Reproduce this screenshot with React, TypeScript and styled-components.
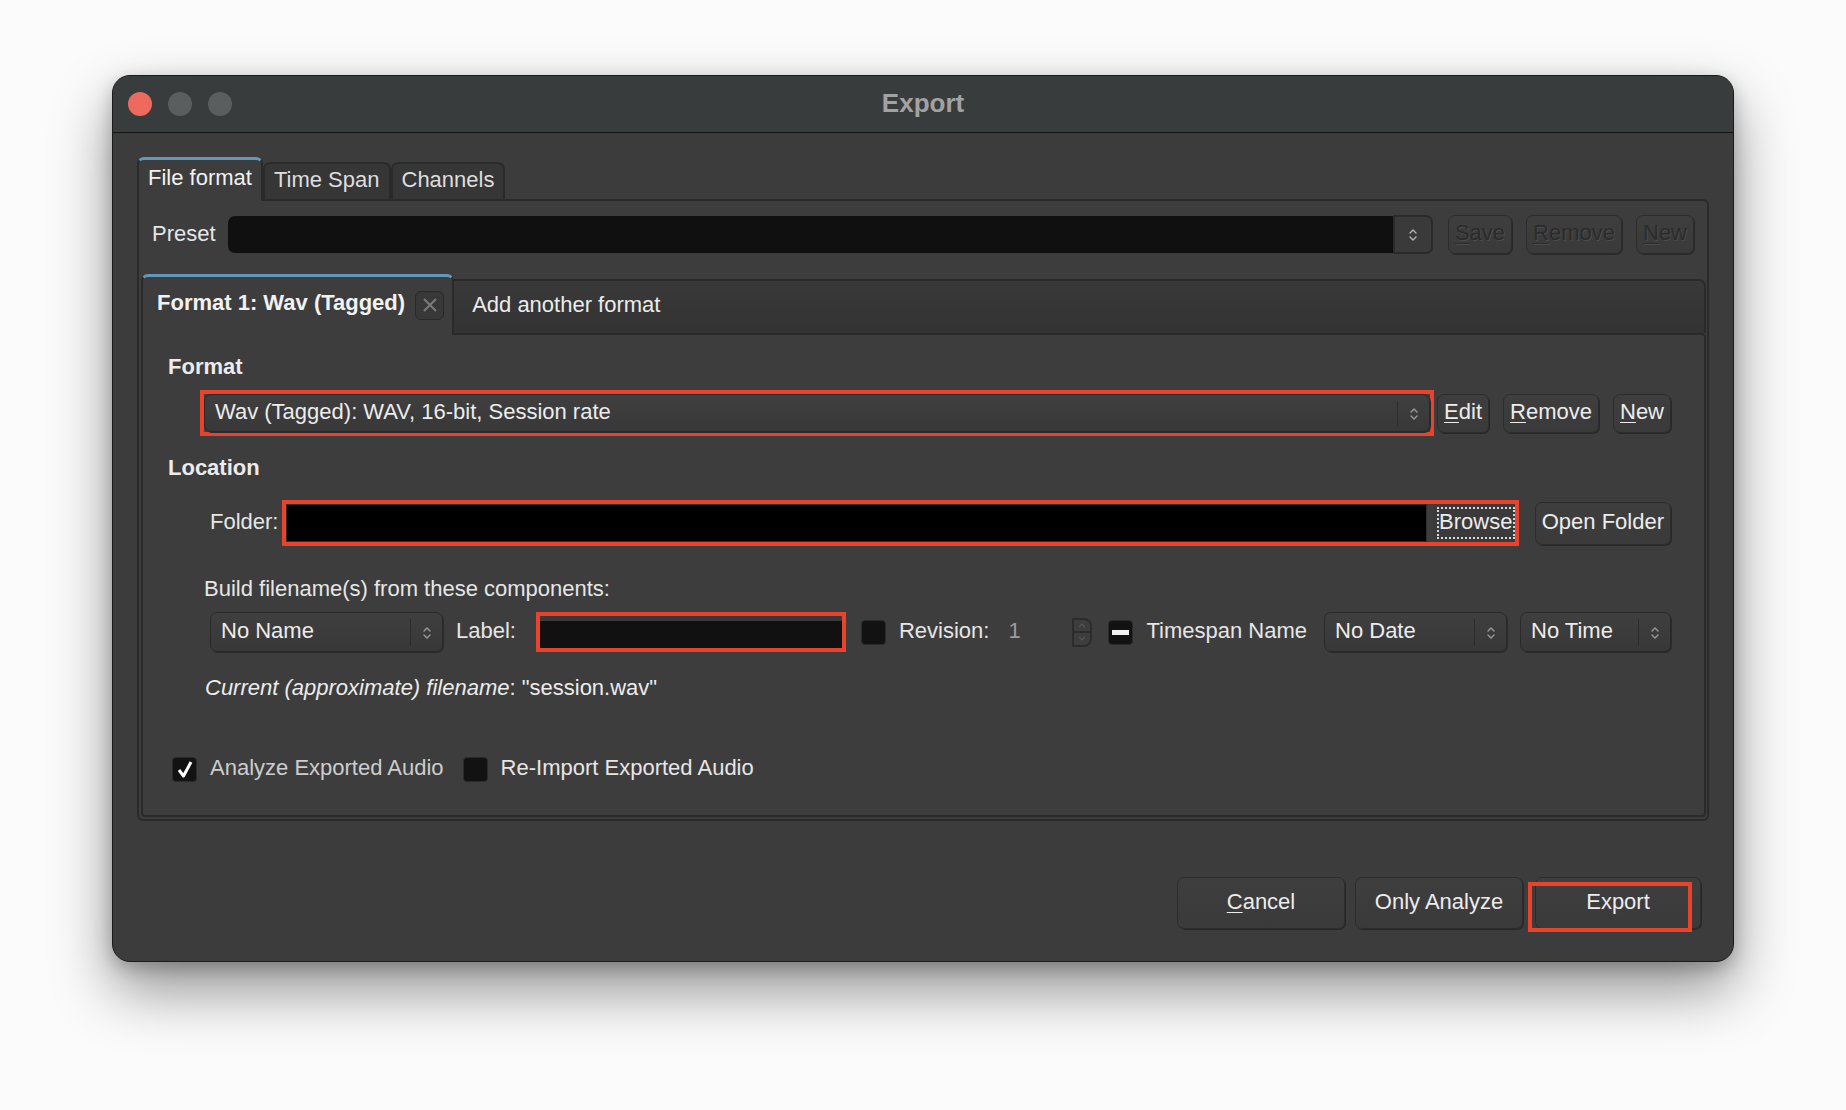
import React from 'react';
import styled, {createGlobalStyle, css} from 'styled-components';

const GlobalStyle = createGlobalStyle`
  html, body {
    margin: 0;
    padding: 0;
    background: #fbfbfb;
  }
  body {
    font-family: "Liberation Sans", Arial, sans-serif;
  }
  * {
    box-sizing: border-box;
  }
`;

const RED = '#e9432b';
const EDGE = '#2a2a2a';

const Stage = styled.div`
  width: 1846px;
  height: 1110px;
  padding: 75px 0 0 112px;
  overflow: hidden;
`;

const Window = styled.div`
  width: 1622px;
  height: 887px;
  display: flex;
  flex-direction: column;
  background: #3c3c3c;
  border: 1px solid #1b1b1b;
  border-radius: 18px;
  overflow: hidden;
  box-shadow: 0 28px 60px rgba(0, 0, 0, 0.42), 0 6px 18px rgba(0, 0, 0, 0.22);
  font-size: 22px;
  line-height: 26px;
  color: #e6e6e6;
`;

const TitleBar = styled.div`
  height: 57px;
  flex: none;
  display: grid;
  grid-template-columns: 1fr auto 1fr;
  align-items: center;
  background: #393c3c;
  border-bottom: 1px solid #141414;
`;

const Lights = styled.div`
  display: flex;
  gap: 16px;
  padding-left: 15px;
`;

const Light = styled.span<{$color: string}>`
  width: 24px;
  height: 24px;
  border-radius: 50%;
  background: ${(p) => p.$color};
`;

const Title = styled.div`
  font-size: 26px;
  font-weight: bold;
  color: #a2a2a2;
  padding-bottom: 2px;
`;

const Content = styled.div`
  flex: 1;
  display: flex;
  flex-direction: column;
  padding: 24px 24px 0 24px;
  min-height: 0;
`;

const TabBar = styled.div`
  display: flex;
  align-items: flex-end;
  height: 42px;
  flex: none;
`;

const OuterTab = styled.div<{$active?: boolean}>`
  display: flex;
  align-items: center;
  height: ${(p) => (p.$active ? 44 : 37)}px;
  padding: 0 9px ${(p) => (p.$active ? 5 : 3)}px;
  border: 2px solid ${EDGE};
  border-bottom: none;
  border-radius: 7px 7px 0 0;
  background: ${(p) => (p.$active ? '#3d3d3d' : '#363636')};
  color: ${(p) => (p.$active ? '#f2f2f2' : '#dedede')};
  margin-bottom: ${(p) => (p.$active ? -2 : 0)}px;
  position: relative;
  z-index: ${(p) => (p.$active ? 2 : 1)};
  ${(p) =>
    p.$active &&
    css`
      border-top: 3px solid #6197bd;
    `}
`;

const OuterPane = styled.div`
  flex: 1;
  display: flex;
  flex-direction: column;
  border: 2px solid ${EDGE};
  border-radius: 0 6px 6px 6px;
  background: #3d3d3d;
  padding: 14px 1px 2px 2px;
`;

const PresetRow = styled.div`
  display: flex;
  align-items: center;
  height: 39px;
  padding: 0 12px 0 11px;
`;

const PresetLabel = styled.span`
  margin-right: 12px;
  padding-bottom: 2px;
`;

const PresetField = styled.div`
  flex: 1;
  height: 37px;
  background: #101010;
  border-radius: 7px 0 0 7px;
`;

const PresetArrow = styled.div`
  width: 40px;
  height: 39px;
  display: flex;
  align-items: center;
  justify-content: center;
  background: #3a3a3a;
  border: 2px solid ${EDGE};
  border-radius: 0 7px 7px 0;
  margin-right: 15px;
`;

const Buttons = styled.div<{$gap?: number}>`
  display: flex;
  align-items: center;
  gap: ${(p) => p.$gap ?? 14}px;
`;

const Button = styled.div<{$disabled?: boolean; $height?: number; $width?: number}>`
  position: relative;
  display: flex;
  align-items: center;
  justify-content: center;
  height: ${(p) => p.$height ?? 39}px;
  ${(p) =>
    p.$width
      ? css`
          width: ${p.$width}px;
          padding-bottom: 3px;
        `
      : css`
          padding: 0 6px 3px;
        `}
  background: linear-gradient(#3e3e3e, #3a3a3a);
  border: 1px solid #2c2c2c;
  border-radius: 7px;
  box-shadow: 1px 1px 0 #282828;
  white-space: nowrap;
  color: ${(p) => (p.$disabled ? '#2b2b2b' : '#ececec')};
  text-shadow: ${(p) => (p.$disabled ? '1px 1px 0 rgba(255,255,255,0.09)' : 'none')};
  flex: none;
`;

const Key = styled.u`
  text-decoration-thickness: 1px;
  text-underline-offset: 3px;
`;

const InnerTabBar = styled.div`
  display: flex;
  align-items: flex-end;
  height: 59px;
  margin-top: 20px;
  flex: none;
`;

const InnerTab = styled.div<{$active?: boolean}>`
  display: flex;
  align-items: center;
  border: 2px solid ${EDGE};
  border-bottom: none;
  position: relative;
  ${(p) =>
    p.$active
      ? css`
          height: 61px;
          margin-bottom: -2px;
          z-index: 2;
          padding: 0 8px 6px 14px;
          gap: 10px;
          font-weight: bold;
          color: #f2f2f2;
          background: #3d3d3d;
          border-top: 3px solid #6197bd;
          border-radius: 7px 7px 0 0;
        `
      : css`
          flex: 1;
          height: 54px;
          padding: 0 0 5px 18px;
          color: #ececec;
          background: linear-gradient(#393939, #333333);
          border-left: none;
          border-radius: 0 7px 0 0;
        `}
`;

const CloseBox = styled.span`
  width: 29px;
  height: 29px;
  display: flex;
  align-items: center;
  justify-content: center;
  background: #383838;
  border: 1px solid #292929;
  border-radius: 6px;
  margin-top: 4px;
`;

const InnerPane = styled.div`
  flex: 1;
  display: flex;
  flex-direction: column;
  border: 2px solid ${EDGE};
  border-radius: 0 4px 4px 4px;
  background: #3d3d3d;
  padding: 19px 33px 0 25px;
`;

const SectionLabel = styled.div<{$mt?: number}>`
  font-weight: bold;
  color: #ececec;
  margin-top: ${(p) => p.$mt ?? 0}px;
`;

const Row = styled.div<{$mt: number; $indent: number; $height?: number}>`
  display: flex;
  align-items: center;
  margin-top: ${(p) => p.$mt}px;
  padding-left: ${(p) => p.$indent}px;
  ${(p) =>
    p.$height &&
    css`
      height: ${p.$height}px;
    `}
`;

const Text = styled.span<{$ml?: number; $color?: string}>`
  margin-left: ${(p) => p.$ml ?? 0}px;
  color: ${(p) => p.$color ?? '#e6e6e6'};
  white-space: nowrap;
  flex: none;
  padding-bottom: 2px;
`;

const Highlight = styled.div<{$grow?: boolean; $ml?: number}>`
  display: flex;
  align-items: center;
  border: 4px solid ${RED};
  margin-left: ${(p) => p.$ml ?? 0}px;
  ${(p) =>
    p.$grow &&
    css`
      flex: 1;
    `}
`;

const Combo = styled.div<{$width?: number; $height?: number; $ml?: number}>`
  display: flex;
  align-items: center;
  height: ${(p) => p.$height ?? 40}px;
  ${(p) =>
    p.$width
      ? css`
          width: ${p.$width}px;
          flex: none;
        `
      : css`
          flex: 1;
        `}
  margin-left: ${(p) => p.$ml ?? 0}px;
  padding-left: 10px;
  background: linear-gradient(#3f3f3f, #383838);
  border: 1px solid #2a2a2a;
  border-radius: 7px;
  box-shadow: 1px 1px 0 #2a2a2a;
  color: #ececec;
  white-space: nowrap;
`;

const ComboValue = styled.span`
  flex: 1;
  padding-bottom: 3px;
`;

const ComboArrows = styled.span`
  width: 32px;
  align-self: stretch;
  margin: 6px 0 5px;
  border-left: 1px solid #2c2c2c;
  display: flex;
  align-items: center;
  justify-content: center;
`;

const FolderField = styled.div`
  flex: 1;
  height: 38px;
  background: #000;
  border: 1px solid #2e2e2e;
`;

const BrowseButton = styled.div`
  width: 82px;
  height: 38px;
  margin-left: 6px;
  padding: 3px 0 3px 4px;
  background: #3a3a3a;
  border-radius: 6px 0 0 6px;
`;

const FocusRing = styled.div`
  height: 100%;
  display: flex;
  align-items: center;
  justify-content: center;
  padding-bottom: 2px;
  border: 2px dotted #d8d8d8;
  color: #ececec;
`;

const LabelField = styled.div`
  width: 302px;
  height: 32px;
  background: #111;
  border-top: 5px solid #393939;
`;

const Check = styled.span<{$ml?: number}>`
  width: 25px;
  height: 25px;
  flex: none;
  display: flex;
  align-items: center;
  justify-content: center;
  margin-left: ${(p) => p.$ml ?? 0}px;
  background: #121212;
  border: 1px solid #2b2b2b;
  border-radius: 4px;
`;

const Dash = styled.span`
  width: 17px;
  height: 5px;
  background: #f2f2f2;
`;

const SpinField = styled.div`
  width: 92px;
  margin-left: -2px;
  display: flex;
  align-items: center;
  flex: none;
`;

const SpinValue = styled.span`
  flex: 1;
  padding: 0 0 2px 8px;
  color: #9c9c9c;
`;

const SpinButtons = styled.div`
  display: flex;
  flex-direction: column;
  width: 20px;
  height: 29px;
`;

const SpinHalf = styled.span<{$up?: boolean}>`
  flex: 1;
  display: flex;
  align-items: center;
  justify-content: center;
  border: 2px solid #2c2c2c;
  ${(p) =>
    p.$up
      ? css`
          border-radius: 0 8px 0 0;
        `
      : css`
          border-top: none;
          border-radius: 0 0 8px 0;
        `}
`;

const Components = styled(Row)`
  gap: 13px;
`;

const Filename = styled.div`
  margin-top: 23px;
  padding-left: 37px;
  color: #ececec;
`;

const Italic = styled.i`
  font-style: italic;
`;

const Footer = styled.div`
  height: 140px;
  flex: none;
  display: flex;
  justify-content: flex-end;
  align-items: flex-end;
  gap: 10px;
  padding: 0 32px 32px 0;
`;

const ExportMark = styled.span`
  position: absolute;
  left: -8px;
  top: 4px;
  width: 164px;
  height: 50px;
  border: 4px solid ${RED};
`;

function Chevrons({color = '#a8a8a8'}: {color?: string}) {
  return (
    <svg width='10' height='18' viewBox='0 0 10 18'>
      <path d='M2 7 L5 4 L8 7 M2 11 L5 14 L8 11' stroke={color} strokeWidth='1.4' fill='none' strokeLinecap='round' strokeLinejoin='round' />
    </svg>
  );
}

function Caret({up}: {up?: boolean}) {
  return (
    <svg width='8' height='6' viewBox='0 0 8 6'>
      <path d={up ? 'M1 5 L4 2 L7 5' : 'M1 1 L4 4 L7 1'} stroke='#555' strokeWidth='1.2' fill='none' />
    </svg>
  );
}

function ComboBox({value, width, height, ml}: {value: string; width?: number; height?: number; ml?: number}) {
  return (
    <Combo $width={width} $height={height} $ml={ml}>
      <ComboValue>{value}</ComboValue>
      <ComboArrows>
        <Chevrons color='#9a9a9a' />
      </ComboArrows>
    </Combo>
  );
}

export default function App() {
  return (
    <>
      <GlobalStyle />
      <Stage>
        <Window>
          <TitleBar>
            <Lights>
              <Light $color='#ee6a5f' />
              <Light $color='#5b5e5e' />
              <Light $color='#5b5e5e' />
            </Lights>
            <Title>Export</Title>
            <span />
          </TitleBar>

          <Content>
            <TabBar>
              <OuterTab $active>File format</OuterTab>
              <OuterTab>Time Span</OuterTab>
              <OuterTab>Channels</OuterTab>
            </TabBar>

            <OuterPane>
              <PresetRow>
                <PresetLabel>Preset</PresetLabel>
                <PresetField />
                <PresetArrow>
                  <Chevrons color='#b4b4b4' />
                </PresetArrow>
                <Buttons>
                  <Button $disabled>
                    <Key>S</Key>ave
                  </Button>
                  <Button $disabled>
                    <Key>R</Key>emove
                  </Button>
                  <Button $disabled>
                    <Key>N</Key>ew
                  </Button>
                </Buttons>
              </PresetRow>

              <InnerTabBar>
                <InnerTab $active>
                  Format 1: Wav (Tagged)
                  <CloseBox>
                    <svg width='16' height='16' viewBox='0 0 16 16'>
                      <path d='M2 2 L14 14 M14 2 L2 14' stroke='#7c7c7c' strokeWidth='2' />
                    </svg>
                  </CloseBox>
                </InnerTab>
                <InnerTab>Add another format</InnerTab>
              </InnerTabBar>

              <InnerPane>
                <SectionLabel>Format</SectionLabel>
                <Row $mt={10} $indent={32}>
                  <Highlight $grow>
                    <ComboBox value='Wav (Tagged): WAV, 16-bit, Session rate' height={38} />
                  </Highlight>
                  <Buttons style={{marginLeft: 3}}>
                    <Button>
                      <Key>E</Key>dit
                    </Button>
                    <Button>
                      <Key>R</Key>emove
                    </Button>
                    <Button>
                      <Key>N</Key>ew
                    </Button>
                  </Buttons>
                </Row>

                <SectionLabel $mt={19}>Location</SectionLabel>
                <Row $mt={19} $indent={42}>
                  <Text>Folder:</Text>
                  <Highlight $grow $ml={4}>
                    <FolderField />
                    <BrowseButton>
                      <FocusRing>Browse</FocusRing>
                    </BrowseButton>
                  </Highlight>
                  <Button $height={43} style={{marginLeft: 16}}>
                    Open Folder
                  </Button>
                </Row>

                <Row $mt={30} $indent={36}>
                  <Text>Build filename(s) from these components:</Text>
                </Row>
                <Components $mt={8} $indent={42} $height={40}>
                  <ComboBox value='No Name' width={233} />
                  <Text>Label:</Text>
                  <Highlight $ml={7}>
                    <LabelField />
                  </Highlight>
                  <Check $ml={2} />
                  <Text>Revision:</Text>
                  <SpinField>
                    <SpinValue>1</SpinValue>
                    <SpinButtons>
                      <SpinHalf $up>
                        <Caret up />
                      </SpinHalf>
                      <SpinHalf>
                        <Caret />
                      </SpinHalf>
                    </SpinButtons>
                  </SpinField>
                  <Check $ml={3}>
                    <Dash />
                  </Check>
                  <Text>Timespan Name</Text>
                  <ComboBox value='No Date' width={183} ml={4} />
                  <ComboBox value='No Time' width={151} />
                </Components>

                <Filename>
                  <Italic>Current (approximate) filename</Italic>: "session.wav"
                </Filename>

                <Row $mt={54} $indent={4}>
                  <Check>
                    <svg width='18' height='20' viewBox='0 0 18 20'>
                      <path d='M3 11 L7.5 17 L15 3' stroke='#ffffff' strokeWidth='3' fill='none' strokeLinejoin='round' />
                    </svg>
                  </Check>
                  <Text $ml={13} $color='#cdcdcd'>
                    Analyze Exported Audio
                  </Text>
                  <Check $ml={19} />
                  <Text $ml={13}>Re-Import Exported Audio</Text>
                </Row>
              </InnerPane>
            </OuterPane>
          </Content>

          <Footer>
            <Button $height={52} $width={168}>
              <span>
                <Key>C</Key>ancel
              </span>
            </Button>
            <Button $height={52} $width={168}>
              Only Analyze
            </Button>
            <Button $height={52} $width={166} style={{marginLeft: 2}}>
              Export
              <ExportMark />
            </Button>
          </Footer>
        </Window>
      </Stage>
    </>
  );
}
